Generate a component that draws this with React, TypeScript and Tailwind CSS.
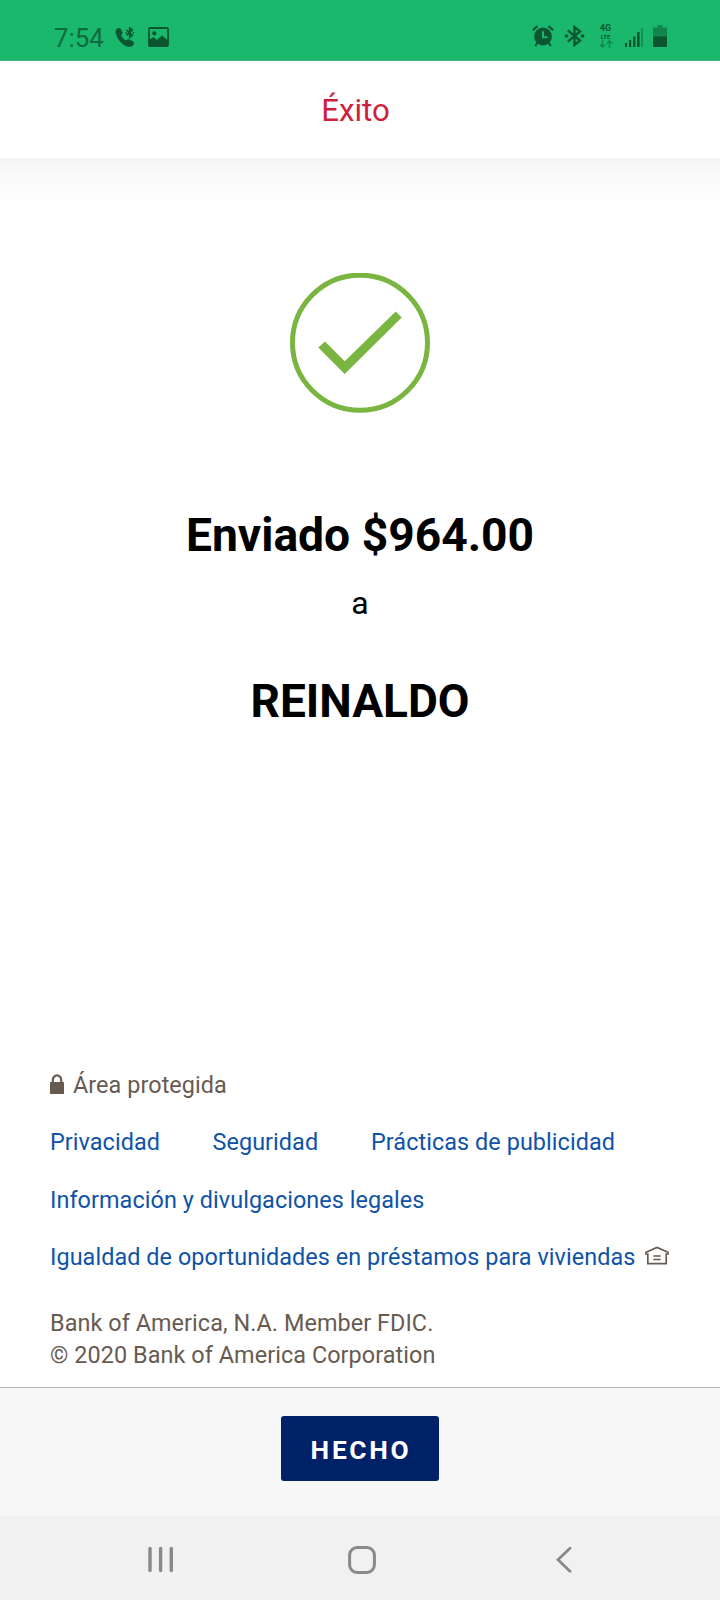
import React from "react";

function StatusBar() {
  return (
    <div className="flex h-[61px] shrink-0 items-start border-b border-[#4fae84] bg-[#19b86c] pr-[53px] pl-[54px] pt-[25px] text-[#0b5531]">
      <span className="-mt-[1px] w-[61px] text-[25.800px] leading-[28px] text-[#0e6b3f]">7:54</span>
      <svg className="mt-[2px] h-[21px] w-[21px]" viewBox="0 0 21 21" fill="none" stroke="currentColor">
        <path d="M1.200 2.500C2.500.8 4.200.4 5.400 1.600l2 3.300c.5 1-.2 2-1.300 3 1 2.500 2.600 4.300 5 5.600 1-1.200 2-1.700 3.100-1.100l4 2.200c1.300 1 1 2.500-.3 3.900-1.500 1.600-4 1.900-6.500.8C6.500 17 2.600 12.500 1.100 7.500.4 5.500.4 3.800 1.200 2.500z" fill="currentColor" stroke="none" />
        <path d="M11.500 3l5.800 5.200-2.600 2.300V.8l2.600 2.300-5.800 5.200" strokeWidth="1.600" />
        <path d="M10.600 5.700h1.400M17.800 5.700h1.400" strokeWidth="1.600" />
      </svg>
      <svg className="ml-[12px] mt-[2px] h-[21px] w-[21px]" viewBox="0 0 21 21">
        <rect x="1" y="1" width="19" height="18" rx="1" fill="none" stroke="currentColor" strokeWidth="1.800" />
        <circle cx="6.300" cy="6.300" r="2.100" fill="currentColor" />
        <path d="M1 13l4.500-3 3.500 3 5-4.500 6 5V19H1z" fill="currentColor" />
      </svg>
      <div className="ml-auto flex items-start">
        <svg className="h-[22px] w-[22px]" viewBox="0 0 22 22" fill="none" stroke="currentColor">
          <circle cx="11" cy="11.500" r="8.900" fill="currentColor" stroke="none" />
          <path d="M.8 5.200L5.600 1.200M21.200 5.200L16.400 1.200M5.500 17.500L3.200 21M16.500 17.500L18.800 21" strokeWidth="2.200" />
          <path d="M11 6.200v6h4.600" stroke="#19b86c" strokeWidth="2" />
        </svg>
        <svg className="ml-[10px] h-[22px] w-[21px]" viewBox="0 0 21 22" fill="none" stroke="currentColor" strokeWidth="2.300">
          <path d="M3.800 5.300L16 15.600l-5.500 4.400V2L16 6.400 3.800 16.700" />
          <path d="M.8 11h3.400M16.800 11h3.400" strokeWidth="3" />
        </svg>
        <div className="-mt-[1px] ml-[13px] flex w-[15px] flex-col items-center font-bold">
          <span className="text-[9px] leading-[9px]">4G</span>
          <span className="mt-[1px] text-[6px] leading-[6px]">LTE</span>
          <svg className="h-[8px] w-[14px] text-[#128a51]" viewBox="0 0 14 8" fill="none" stroke="currentColor" strokeWidth="1.500">
            <path d="M3.500 0v7M.8 4.200l2.700 2.900 2.700-2.900M10.500 8V1M7.800 3.800l2.700-2.900 2.700 2.900" />
          </svg>
        </div>
        <svg className="ml-[12px] mt-[1px] h-[21px] w-[18px]" viewBox="0 0 18 21">
          <path d="M0 17h2v4H0zM4 14h2.200v7H4zM8 10.500h2.400V21H8zM12 6h2.600v15H12z" fill="currentColor" />
          <path d="M16 2h2v19h-2z" fill="#129055" />
        </svg>
        <svg className="ml-[10px] h-[22px] w-[14px]" viewBox="0 0 14 22">
          <path d="M4.500 0h5v2.500H14V12H0V2.500h4.500z" fill="#11854d" />
          <path d="M0 11.500h14V21q0 1-1 1H1q-1 0-1-1z" fill="currentColor" />
        </svg>
      </div>
    </div>
  );
}

function Footer() {
  return (
    <footer className="mt-auto pl-[50px] text-[23.400px] leading-[32px] tracking-[0.070px] text-[#675b51]">
      <div className="flex items-center">
        <svg className="h-[20px] w-[14px] -mt-[3px]" viewBox="0 0 14 20">
          <path d="M2.800 9V6a4.200 4.700 0 0 1 8.400 0v3" fill="none" stroke="currentColor" strokeWidth="2.200" />
          <rect y="8" width="14" height="12" rx=".5" fill="currentColor" />
        </svg>
        <span className="ml-[9px]">Área protegida</span>
      </div>
      <nav className="mt-[25px] flex flex-col gap-[25.400px] text-[#0f53a8]">
        <div className="flex">
          <a className="w-[162.500px]">Privacidad</a>
          <a className="w-[158.500px]">Seguridad</a>
          <a>Prácticas de publicidad</a>
        </div>
        <a>Información y divulgaciones legales</a>
        <div className="flex items-center">
          <a className="whitespace-nowrap">Igualdad de oportunidades en préstamos para viviendas</a>
          <svg className="ml-[10px] -mt-[3px] h-[19px] w-[24px] shrink-0 text-[#675b51]" viewBox="0 0 24 19" fill="none" stroke="currentColor">
            <path d="M2.800 8V17.600H21.200V8H23V6.300L12 1.400 1 6.300V8z" strokeWidth="1.700" />
            <path d="M8.300 10h7.400M8.300 13.500h7.400" strokeWidth="1.700" />
          </svg>
        </div>
      </nav>
      <p className="mt-[34px] mb-[16px]">
        Bank of America, N.A. Member FDIC.
        <br />© 2020 Bank of America Corporation
      </p>
    </footer>
  );
}

function NavigationBar() {
  return (
    <div className="flex h-[84px] shrink-0 items-start bg-[#f1f1f1] pt-[30px] pl-[147px] text-[#898989]">
      <svg className="h-[28px] w-[28px]" viewBox="0 0 28 28" stroke="currentColor" strokeWidth="3.400" strokeLinecap="round">
        <path d="M3 2.500v22M13.600 2.500v22M24.300 2.500v22" />
      </svg>
      <svg className="ml-[173px] h-[28px] w-[28px]" viewBox="0 0 28 28" fill="none" stroke="currentColor" strokeWidth="3">
        <rect x="1.600" y="1.600" width="24.800" height="24.800" rx="7.500" />
      </svg>
      <svg className="ml-[180px] h-[28px] w-[18px]" viewBox="0 0 18 28" fill="none" stroke="currentColor" strokeWidth="2.800" strokeLinecap="round">
        <path d="M14 2.300L2 13.800l12 11.400" />
      </svg>
    </div>
  );
}

export default function App() {
  return (
    <div className="flex h-[1600px] w-[720px] flex-col overflow-hidden bg-white font-['Roboto',sans-serif]">
      <StatusBar />
      <header className="flex h-[97px] shrink-0 items-center justify-center pt-[2px] pr-[9px] text-[31.300px] leading-[40px] text-[#ce1f3f]">
        Éxito
      </header>
      <main className="flex min-h-0 flex-1 flex-col bg-linear-to-b from-[#f4f4f4] via-[#fafafa] via-[18px] to-white to-[48px]">
        <section className="flex flex-col items-center pt-[115px] text-black">
          <svg className="h-[140px] w-[140px] text-[#7ab541]" viewBox="0 0 140 140">
            <circle cx="70" cy="69.700" r="67.500" fill="none" stroke="currentColor" strokeWidth="5" />
            <path d="M28.300 74.500L35 68.500 54.700 88.200 105.700 38.500 111.700 44.500 54.700 101z" fill="currentColor" />
          </svg>
          <h1 className="mt-[95px] text-[46.200px] font-bold leading-[54px]">Enviado $964.00</h1>
          <p className="mt-[21px] text-[32px] leading-[40px]">a</p>
          <h2 className="mt-[51px] text-[46px] font-bold leading-[54px]">REINALDO</h2>
        </section>
        <Footer />
      </main>
      <div className="flex h-[129px] shrink-0 items-start justify-center border-t border-[#b5b5b5] bg-[#f7f7f7] pt-[28px]">
        <button className="h-[65px] w-[158px] rounded-[3px] bg-[#012169] pl-[2px] pt-[2px] text-[26.300px] font-bold leading-[40px] tracking-[2.700px] text-white">
          HECHO
        </button>
      </div>
      <NavigationBar />
    </div>
  );
}
